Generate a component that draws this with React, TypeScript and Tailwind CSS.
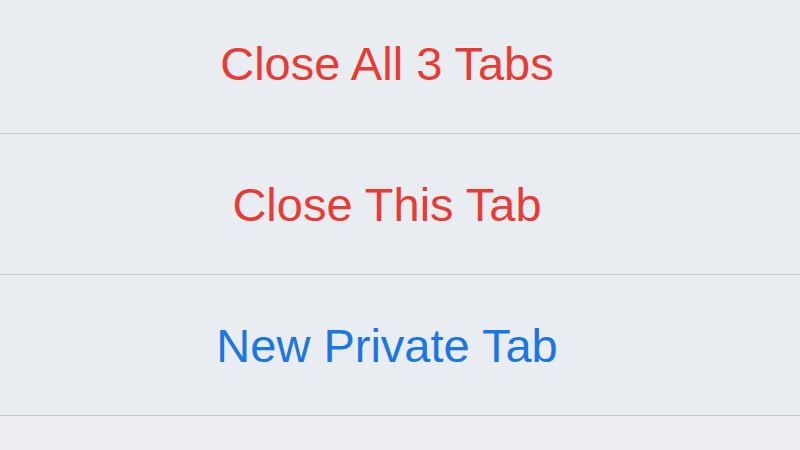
import React from 'react';

const actions = [
  { label: 'Close All 3 Tabs', color: 'text-[#e63c35]' },
  { label: 'Close This Tab', color: 'text-[#e63c35]' },
  { label: 'New Private Tab', color: 'text-[#1b76e2]' },
];

export default function App() {
  return (
    <div className="w-[800px] h-[450px] overflow-hidden bg-[#e9ecf0] flex flex-col font-['Liberation_Sans',Arial,sans-serif]">
      <div className="flex flex-col -mt-[7px]">
        {actions.map((a) => (
          <button
            key={a.label}
            className={`h-[141px] shrink-0 flex items-center justify-center border-b-[1.5px] border-[#c2c8d0] text-[47px] leading-none pt-[1px] ${a.color}`}
          >
            <span className="-ml-[26px]">{a.label}</span>
          </button>
        ))}
      </div>
      <div className="flex-1 bg-[#edeef1]" />
    </div>
  );
}
